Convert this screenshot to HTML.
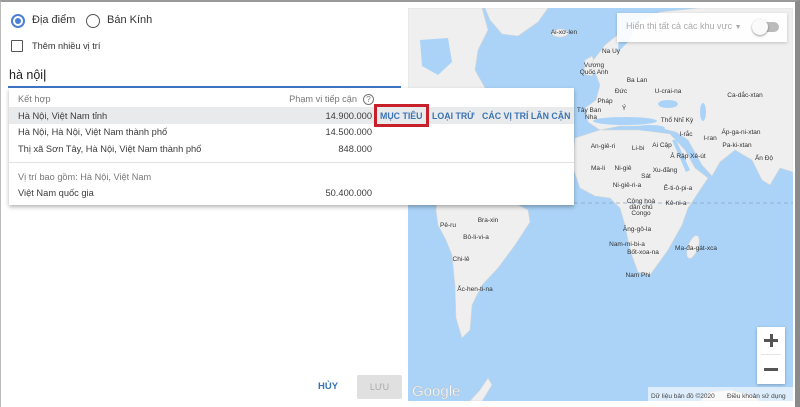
<!DOCTYPE html>
<html><head><meta charset="utf-8"><style>
*{margin:0;padding:0;box-sizing:border-box}
body{width:800px;height:407px;overflow:hidden;background:#fff;font-family:"Liberation Sans",Arial,sans-serif;position:relative;color:#333}
.abs{position:absolute;white-space:nowrap}
.frame{position:absolute;left:0;top:0;width:800px;height:407px;border-top:2px solid #9a9a9a;border-right:5px solid #8a8a8a;border-left:1px solid #bbb;pointer-events:none}
.t{font-size:9.3px;color:#3c3c3c}
.g{font-size:9.2px;color:#777}
.btn{font-size:8.8px;font-weight:bold;color:#3a74b5}
.r{transform:translateX(-100%)}
</style></head><body>
<svg class="abs" style="left:408px;top:8px" width="385" height="393" viewBox="408 8 385 393">
<rect x="408" y="8" width="385" height="393" fill="#aad3f7"/>
<g fill="#efefef" stroke="#d6d6d6" stroke-width="0.6">
<path d="M408,8 L482,8 L488,30 L478,50 L475,70 L485,88 L470,98 L455,92 L440,88 L425,96 L408,100 Z"/>
<path d="M485,8 L548,8 L538,22 L518,36 L502,34 L490,20 Z"/>
<ellipse cx="560" cy="33" rx="8" ry="4"/>
<path d="M585,60 L592,56 L596,66 L592,76 L584,74 Z"/>
<path d="M592,62 L605,45 L630,25 L660,12 L700,8 L793,8 L793,172 L780,168 L770,185 L762,180 L752,160 L735,150 L720,162 L712,176 L702,165 L688,140 L676,132 L660,128 L640,126 L620,126 L600,130 L588,122 L585,108 L596,100 L600,85 L595,72 Z"/>
<path d="M575,138 L600,130 L640,130 L670,134 L685,150 L695,168 L708,178 L700,190 L688,208 L682,225 L668,250 L650,275 L638,272 L630,250 L625,225 L620,208 L610,198 L595,196 L580,188 L572,165 Z"/>
<ellipse cx="693" cy="247" rx="5" ry="12" transform="rotate(20 693 247)"/>
<path d="M438,196 L470,190 L505,198 L528,210 L530,222 L515,245 L498,268 L482,285 L472,305 L470,330 L462,338 L456,318 L455,285 L452,255 L446,240 L438,225 L436,210 Z"/>
<path d="M470,401 L480,390 L488,378 L492,385 L482,401 Z"/>
<path d="M700,401 L710,392 L730,390 L750,395 L760,401 Z"/>
</g>
<g fill="#aad3f7"><ellipse cx="625" cy="121" rx="32" ry="4"/><ellipse cx="650" cy="128" rx="15" ry="3"/><ellipse cx="668" cy="104" rx="10" ry="4"/><ellipse cx="703" cy="112" rx="3" ry="9"/><path d="M420,40 L448,38 L452,62 L438,75 L422,66 Z"/><path d="M672,140 L676,140 L690,170 L686,172 Z"/><path d="M620,20 L640,14 L630,40 L618,52 Z"/></g>
<line x1="574" y1="203" x2="793" y2="203" stroke="#8aa6c6" stroke-dasharray="4,3" stroke-width="0.8"/>
<g font-family="Liberation Sans,sans-serif" font-size="6.5" fill="#333" text-anchor="middle">
<text x="564" y="34">Ai-xơ-len</text><text x="611" y="53">Na Uy</text>
<text x="594" y="67">Vương</text><text x="594" y="74">Quốc Anh</text><text x="637" y="82">Ba Lan</text>
<text x="621" y="93">Đức</text><text x="668" y="93">U-crai-na</text><text x="745" y="97">Ca-dắc-xtan</text>
<text x="605" y="103">Pháp</text><text x="589" y="112">Tây Ban</text><text x="591" y="119">Nha</text>
<text x="624" y="110">Ý</text><text x="677" y="122">Thổ Nhĩ Kỳ</text>
<text x="686" y="136">I-rắc</text><text x="710" y="140">I-ran</text><text x="741" y="134">Áp-ga-ni-xtan</text>
<text x="737" y="147">Pa-ki-xtan</text><text x="764" y="160">Ấn Độ</text>
<text x="603" y="148">An-giê-ri</text><text x="638" y="150">Li-bi</text><text x="662" y="147">Ai Cập</text>
<text x="688" y="158">Ả Rập Xê-út</text><text x="598" y="170">Ma-li</text><text x="623" y="170">Ni-giê</text>
<text x="646" y="178">Sát</text><text x="665" y="172">Xu-đăng</text><text x="627" y="187">Ni-giê-ri-a</text>
<text x="678" y="190">Ê-ti-ô-pi-a</text>
<text x="641" y="203">Cộng hoà</text><text x="641" y="209">dân chủ</text><text x="641" y="215">Congo</text>
<text x="676" y="205">Kê-ni-a</text><text x="637" y="231">Ăng-gô-la</text><text x="627" y="246">Nam-mi-bi-a</text>
<text x="643" y="254">Bốt-xoa-na</text><text x="696" y="250">Ma-đa-gát-xca</text><text x="638" y="277">Nam Phi</text>
<text x="488" y="222">Bra-xin</text><text x="448" y="227">Pê-ru</text><text x="476" y="239">Bô-li-vi-a</text>
<text x="461" y="261">Chi-lê</text><text x="475" y="291">Ắc-hen-ti-na</text>
</g>
<text x="412" y="396" font-family="Liberation Sans,sans-serif" font-size="15" fill="#fff" stroke="#bbb" stroke-width="0.4">Google</text>
<rect x="648" y="387" width="145" height="14" fill="rgba(255,255,255,0.6)"/>
<text x="651" y="398" font-family="Liberation Sans,sans-serif" font-size="6.5" fill="#444">Dữ liệu bản đồ ©2020</text>
<text x="727" y="398" font-family="Liberation Sans,sans-serif" font-size="6.5" fill="#444">Điều khoản sử dụng</text>
</svg>
<div class="abs" style="left:617px;top:13px;width:170px;height:29px;background:rgba(255,255,255,0.9);box-shadow:0 1px 3px rgba(0,0,0,.2)"></div>
<div class="abs" style="left:626px;top:21px;font-size:9px;color:#aaa">Hiển thị tất cả các khu vực <span style="font-size:7px">▼</span></div>
<div class="abs" style="left:755px;top:22px;width:24px;height:10px;border-radius:5px;background:#bbb"></div>
<div class="abs" style="left:752px;top:19px;width:16px;height:16px;border-radius:50%;background:#fafafa;box-shadow:0 1px 2px rgba(0,0,0,.4)"></div>
<div class="abs" style="left:757px;top:327px;width:28px;height:57px;background:#fff;box-shadow:0 1px 3px rgba(0,0,0,.25)"></div>
<div class="abs" style="left:761px;top:354px;width:20px;height:1px;background:#e4e4e4"></div>
<div class="abs" style="left:764px;top:339px;width:14px;height:3px;background:#555"></div>
<div class="abs" style="left:769.5px;top:334px;width:3px;height:13px;background:#555"></div>
<div class="abs" style="left:764px;top:368px;width:14px;height:3px;background:#555"></div>
<div class="abs" style="left:0;top:0;width:408px;height:407px;background:#fff"></div>
<div class="abs" style="left:11px;top:14px;width:14px;height:14px;border-radius:50%;border:2px solid #4a7fd6"></div>
<div class="abs" style="left:15px;top:18px;width:6px;height:6px;border-radius:50%;background:#4a7fd6"></div>
<div class="abs" style="left:32px;top:14px;font-size:11px;color:#333">Địa điểm</div>
<div class="abs" style="left:86px;top:14px;width:14px;height:14px;border-radius:50%;border:1.5px solid #555"></div>
<div class="abs" style="left:107px;top:14px;font-size:11px;color:#333">Bán Kính</div>
<div class="abs" style="left:11px;top:40px;width:12px;height:12px;border:1.5px solid #555;border-radius:1px"></div>
<div class="abs" style="left:32px;top:41px;font-size:9.2px;color:#333">Thêm nhiều vị trí</div>
<div class="abs" style="left:9px;top:68px;font-size:12.5px;color:#222">hà nội<span style="color:#000">|</span></div>
<div class="abs" style="left:8px;top:86px;width:393px;height:1.5px;background:#3f74c7"></div>
<div class="abs" style="left:9px;top:88px;width:565px;height:117px;background:#fff;box-shadow:0 2px 4px rgba(0,0,0,.3)"></div>
<div class="abs" style="left:9px;top:107px;width:565px;height:17px;background:#e9eaec"></div>
<div class="abs g" style="left:18px;top:94px">Kết hợp</div>
<div class="abs g r" style="left:357px;top:94px">Phạm vi tiếp cận</div>
<div class="abs" style="left:363px;top:94px;width:11px;height:11px;border:1px solid #777;border-radius:50%;font-size:8px;color:#777;text-align:center;line-height:9px">?</div>
<div class="abs t" style="left:18px;top:111px">Hà Nội, Việt Nam tỉnh</div>
<div class="abs t" style="left:18px;top:127px">Hà Nội, Hà Nội, Việt Nam thành phố</div>
<div class="abs t" style="left:18px;top:144px">Thị xã Sơn Tây, Hà Nội, Việt Nam thành phố</div>
<div class="abs t r" style="left:372px;top:111px">14.900.000</div>
<div class="abs t r" style="left:372px;top:127px">14.500.000</div>
<div class="abs t r" style="left:372px;top:144px">848.000</div>
<div class="abs" style="left:9px;top:162px;width:565px;height:1px;background:#e2e2e2"></div>
<div class="abs g" style="left:18px;top:172px">Vị trí bao gồm: Hà Nội, Việt Nam</div>
<div class="abs t" style="left:18px;top:188px">Việt Nam quốc gia</div>
<div class="abs t r" style="left:372px;top:188px">50.400.000</div>
<div class="abs" style="left:374px;top:104px;width:55px;height:23px;border:3px solid #c8202a"></div>
<div class="abs btn" style="left:380px;top:111px">MỤC TIÊU</div>
<div class="abs btn" style="left:432px;top:111px">LOẠI TRỪ</div>
<div class="abs btn" style="left:482px;top:111px">CÁC VỊ TRÍ LÂN CẬN</div>
<div class="abs btn" style="left:318px;top:381px;font-size:9.5px">HỦY</div>
<div class="abs" style="left:357px;top:375px;width:45px;height:24px;background:#e0e0e0;border-radius:2px;font-size:9px;color:#aaa;text-align:center;line-height:24px">LƯU</div>
<div class="frame"></div>
</body></html>
